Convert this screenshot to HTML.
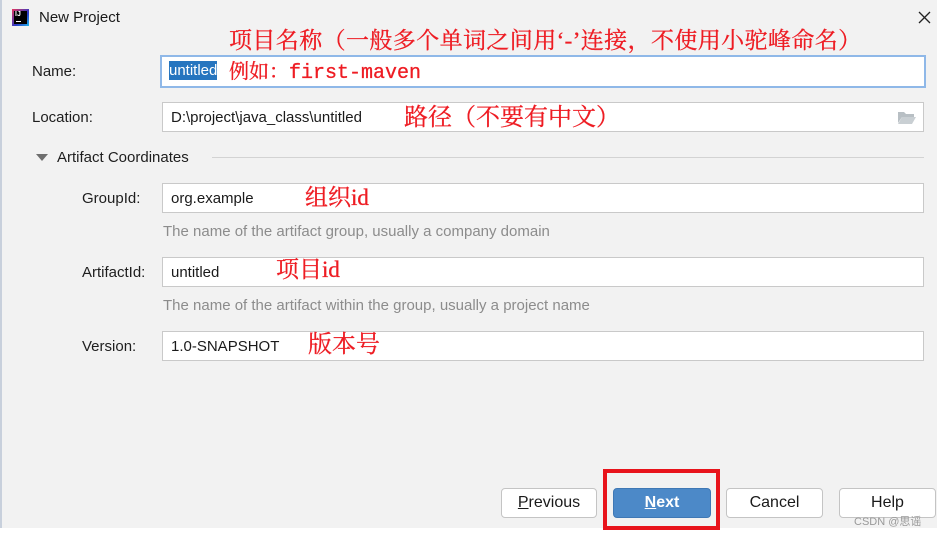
<!DOCTYPE html>
<html><head><meta charset="utf-8"><style>
*{margin:0;padding:0;box-sizing:border-box}
body{width:937px;height:536px;background:#fff;position:relative;overflow:hidden;font-family:"Liberation Sans","Noto Sans CJK SC",sans-serif;font-size:15px;color:#1a1a1a}
#dlg{position:absolute;left:0;top:0;width:937px;height:528px;background:#f2f2f2}
.a{position:absolute;white-space:nowrap}
.lbl{position:absolute;font-size:15px;color:#1e1e1e}
.inp{position:absolute;left:162px;width:762px;height:30px;background:#fff;border:1px solid #c9c9c9;font-size:15px;padding:6px 0 0 8px;line-height:18px}
.hint{position:absolute;left:163px;font-size:15px;color:#8c8c8c}
.red{position:absolute;color:#ee1c23;font-family:"Liberation Serif","Noto Serif CJK SC",serif;white-space:nowrap;line-height:1;-webkit-text-stroke:0.3px #ee1c23}
.btn{position:absolute;top:488px;height:30px;background:#fff;border:1px solid #c4c4c4;border-radius:4px;font-size:16px;text-align:center;line-height:28px}
</style></head><body>
<div id="dlg">
<div class="a" style="left:0;top:0;width:2px;height:528px;background:#c8d0dc"></div>
<div class="a" style="left:12px;top:9px;width:17px;height:17px;background:linear-gradient(135deg,#e8345c,#2a3cc8 60%,#1eb4e8)"><div style="position:absolute;left:2px;top:2px;width:13px;height:13px;background:#000;color:#fff;font-size:7px;font-weight:bold;line-height:8px;padding-left:1px">IJ<div style="position:absolute;left:2px;bottom:2px;width:5px;height:1px;background:#fff"></div></div></div>
<div class="a" style="left:39px;top:9px;font-size:15px">New Project</div>
<svg class="a" style="left:918px;top:11px" width="13" height="13"><path d="M1 1L12 12M12 1L1 12" stroke="#222" stroke-width="1.3"/></svg>

<div class="red" style="left:229px;top:29px;font-size:23px;letter-spacing:0.4px">项目名称（一般多个单词之间用‘-’连接，不使用小驼峰命名）</div>

<div class="lbl" style="left:32px;top:63px">Name:</div>
<div class="inp" style="left:160px;top:55px;width:766px;height:33px;border:2px solid #8fb8e8;padding:5px 0 0 7px"><span style="background:#2675bf;color:#fff;padding:1px 0">untitled</span></div>
<div class="red" style="left:229px;top:62px;font-size:20px">例如：<span style="font-family:'Liberation Mono',monospace;font-size:20px">first-maven</span></div>

<div class="lbl" style="left:32px;top:109px">Location:</div>
<div class="inp" style="top:102px">D:\project\java_class\untitled</div>
<svg class="a" style="left:897px;top:110px" width="20" height="15" viewBox="0 0 20 15"><path d="M1 2h6l2 2h8v3H5L1 13z" fill="#b8bfc4"/><path d="M5 7h14l-4 7H1z" fill="#c9cfd3"/></svg>
<div class="red" style="left:404px;top:106px;font-size:24px">路径（不要有中文）</div>

<svg class="a" style="left:36px;top:154px" width="12" height="8"><path d="M0 0h12L6 7z" fill="#6e6e6e"/></svg>
<div class="lbl" style="left:57px;top:149px">Artifact Coordinates</div>
<div class="a" style="left:212px;top:157px;width:712px;height:1px;background:#d3d3d3"></div>

<div class="lbl" style="left:82px;top:190px">GroupId:</div>
<div class="inp" style="top:183px">org.example</div>
<div class="red" style="left:305px;top:186px;font-size:23px">组织id</div>
<div class="hint" style="top:223px">The name of the artifact group, usually a company domain</div>

<div class="lbl" style="left:82px;top:264px">ArtifactId:</div>
<div class="inp" style="top:257px">untitled</div>
<div class="red" style="left:276px;top:258px;font-size:23px">项目id</div>
<div class="hint" style="top:297px">The name of the artifact within the group, usually a project name</div>

<div class="lbl" style="left:82px;top:338px">Version:</div>
<div class="inp" style="top:331px">1.0-SNAPSHOT</div>
<div class="red" style="left:308px;top:333px;font-size:24px">版本号</div>

<div class="btn" style="left:501px;width:96px"><u>P</u>revious</div>
<div class="btn" style="left:613px;width:98px;background:#4c89c8;border-color:#3f78b5;color:#fff;font-weight:bold"><u>N</u>ext</div>
<div class="btn" style="left:726px;width:97px">Cancel</div>
<div class="btn" style="left:839px;width:97px">Help</div>
<div class="a" style="left:603px;top:469px;width:117px;height:61px;border:4px solid #e8141c"></div>
<div class="a" style="left:854px;top:513px;font-size:11px;color:#999">CSDN @思谣</div>
</div>
</body></html>
